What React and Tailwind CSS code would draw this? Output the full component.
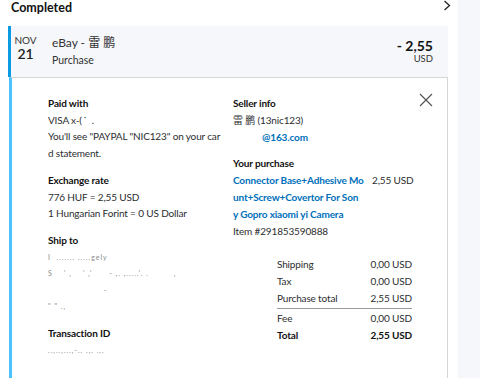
import React from "react";

const F = { fontFamily: 'Lato, "Noto Sans CJK SC", sans-serif' };

function Redact({ w, children }) {
  return (
    <div className="h-[16.5px] text-[7px] leading-[16.5px] text-[#8a8a8a] tracking-[1px] whitespace-nowrap overflow-hidden" style={{ width: w }}>
      {children}
    </div>
  );
}

export default function App() {
  return (
    <div className="w-[480px] h-[378px] bg-white flex overflow-hidden text-[#2c2e2f]" style={F}>
      <div className="w-[458px] shrink-0 flex flex-col pl-[8px] pr-[10px]">
        <div className="h-[26px] flex items-start justify-between pl-[3px] pt-[1px]">
          <div className="text-[12.5px] font-bold leading-[13px] text-[#111]">Completed</div>
          <svg width="10" height="12" viewBox="0 0 10 12" className="mr-[-4px] mt-[-1px]">
            <path d="M2.5 1 L7.5 5.5 L2.5 10" fill="none" stroke="#222" strokeWidth="1.3" />
          </svg>
        </div>
        <div className="h-[51px] bg-[#f5f7fa] border-l-[3px] border-[#0b9be3] flex items-start pr-[15px]">
          <div className="w-[29px] pt-[9px] flex flex-col items-center">
            <div className="text-[10px] leading-[11px] text-[#333]">NOV</div>
            <div className="text-[14px] leading-[15px] font-semibold text-[#222]">21</div>
          </div>
          <div className="flex-1 pt-[9px] ml-[12px]">
            <div className="text-[12px] leading-[15px] text-[#333]">eBay - 雷 鹏</div>
            <div className="text-[10.5px] leading-[15px] mt-[3px] text-[#333]">Purchase</div>
          </div>
          <div className="pt-[12px] flex flex-col items-end">
            <div className="text-[14px] leading-[15px] font-bold text-[#111]">- 2,55</div>
            <div className="text-[9.5px] leading-[11px] text-[#333]">USD</div>
          </div>
        </div>
        <div className="flex-1 border-t border-r border-[#d6d6d6] border-l-[3px] border-l-[#4cc3ff] ml-[1px] flex relative pt-[17px] pl-[36px] text-[10px] tracking-[-0.15px]">
          <svg width="14" height="14" viewBox="0 0 14 14" className="absolute right-[14px] top-[15px]">
            <path d="M1 1 L13 13 M13 1 L1 13" stroke="#555" strokeWidth="1.2" />
          </svg>
          <div className="w-[185px] flex flex-col leading-[16.5px]">
            <div className="font-bold text-[#111]">Paid with</div>
            <div>VISA x-(&#8201;&#729;&nbsp;&nbsp;.</div>
            <div className="whitespace-nowrap">You'll see "PAYPAL "NIC123" on your car</div>
            <div>d statement.</div>
            <div className="font-bold text-[#111] mt-[11px]">Exchange rate</div>
            <div>776 HUF = 2,55 USD</div>
            <div>1 Hungarian Forint = 0 US Dollar</div>
            <div className="font-bold text-[#111] mt-[10.5px]">Ship to</div>
            <Redact w={100}>I&nbsp;&nbsp;....... .....gely</Redact>
            <Redact w={140}>S&nbsp;&nbsp;&nbsp;&nbsp;' ,&nbsp;&nbsp;&nbsp;&nbsp;' ,'&nbsp;&nbsp;&nbsp;&nbsp;&nbsp;&nbsp;- ,. ,.....'. .&nbsp;&nbsp;&nbsp;&nbsp;&nbsp;&nbsp;&nbsp;&nbsp;&nbsp;,</Redact>
            <Redact w={100}>&nbsp;&nbsp;&nbsp;&nbsp;&nbsp;&nbsp;&nbsp;&nbsp;&nbsp;&nbsp;&nbsp;&nbsp;&nbsp;&nbsp;&nbsp;&nbsp;&nbsp;&nbsp;&nbsp;&nbsp;-</Redact>
            <Redact w={100}>" " .,</Redact>
            <div className="font-bold text-[#111] mt-[10.5px]">Transaction ID</div>
            <Redact w={90}>..,..,...,-.. .,. .,.</Redact>
          </div>
          <div className="flex flex-col leading-[17px]">
            <div className="font-bold text-[#111]">Seller info</div>
            <div>雷 鹏 (13nic123)</div>
            <div className="pl-[29px] font-bold text-[#0070ba]">@163.com</div>
            <div className="font-bold text-[#111] mt-[9px]">Your purchase</div>
            <div className="flex">
              <div className="w-[139px] font-bold text-[#0070ba] flex flex-col whitespace-nowrap">
                <span>Connector Base+Adhesive Mo</span>
                <span>unt+Screw+Covertor For Son</span>
                <span>y Gopro xiaomi yi Camera</span>
              </div>
              <div>2,55 USD</div>
            </div>
            <div>Item #291853590888</div>
            <div className="mt-[16px] ml-[44px] w-[135px] flex flex-col">
              <div className="flex justify-between"><span>Shipping</span><span>0,00 USD</span></div>
              <div className="flex justify-between"><span>Tax</span><span>0,00 USD</span></div>
              <div className="flex justify-between border-b border-[#999] pb-[1px]"><span>Purchase total</span><span>2,55 USD</span></div>
              <div className="flex justify-between mt-[1px]"><span>Fee</span><span>0,00 USD</span></div>
              <div className="flex justify-between font-bold text-[#111]"><span>Total</span><span>2,55 USD</span></div>
            </div>
          </div>
        </div>
      </div>
      <div className="flex-1 bg-[#f5f7fa]" />
    </div>
  );
}
